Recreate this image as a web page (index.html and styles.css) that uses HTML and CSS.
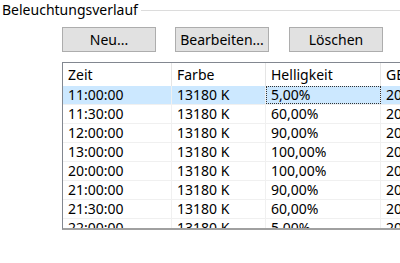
FILE: index.html
```html
<!DOCTYPE html>
<html lang="de">
<head>
    <meta charset="UTF-8">
    <title>Beleuchtungsverlauf</title>
    <link rel="stylesheet" href="styles.css">
</head>
<body>
    <div class="group">
        <div class="group-title">
            <span>Beleuchtungsverlauf</span>
            <div class="group-line"></div>
        </div>
        <div class="buttons">
            <button class="btn">Neu...</button>
            <button class="btn">Bearbeiten...</button>
            <button class="btn">Löschen</button>
        </div>
        <div class="list">
            <div class="row head">
                <div class="cell">Zeit</div>
                <div class="cell">Farbe</div>
                <div class="cell">Helligkeit</div>
                <div class="cell">GE</div>
            </div>
            <div class="row selected">
                <div class="cell">11:00:00</div>
                <div class="cell">13180 K</div>
                <div class="cell focus">5,00%</div>
                <div class="cell">20</div>
            </div>
            <div class="row">
                <div class="cell">11:30:00</div>
                <div class="cell">13180 K</div>
                <div class="cell">60,00%</div>
                <div class="cell">20</div>
            </div>
            <div class="row">
                <div class="cell">12:00:00</div>
                <div class="cell">13180 K</div>
                <div class="cell">90,00%</div>
                <div class="cell">20</div>
            </div>
            <div class="row">
                <div class="cell">13:00:00</div>
                <div class="cell">13180 K</div>
                <div class="cell">100,00%</div>
                <div class="cell">20</div>
            </div>
            <div class="row">
                <div class="cell">20:00:00</div>
                <div class="cell">13180 K</div>
                <div class="cell">100,00%</div>
                <div class="cell">20</div>
            </div>
            <div class="row">
                <div class="cell">21:00:00</div>
                <div class="cell">13180 K</div>
                <div class="cell">90,00%</div>
                <div class="cell">20</div>
            </div>
            <div class="row">
                <div class="cell">21:30:00</div>
                <div class="cell">13180 K</div>
                <div class="cell">60,00%</div>
                <div class="cell">20</div>
            </div>
            <div class="row">
                <div class="cell">22:00:00</div>
                <div class="cell">13180 K</div>
                <div class="cell">5,00%</div>
                <div class="cell">20</div>
            </div>
        </div>
    </div>
</body>
</html>
```

FILE: styles.css
```css
body {
    margin: 0;
    background: #ffffff;
    font-family: "Noto Sans", sans-serif;
    font-size: 14px;
    color: #000000;
    overflow: hidden;
    height: 263px;
}
.group-title {
    display: flex;
    align-items: center;
    height: 20px;
    padding-left: 2px;
}
.group-title span {
    line-height: 20px;
}
.group-line {
    flex: 1;
    height: 1px;
    background: #dcdcdc;
    margin-left: 3px;
}
.buttons {
    display: flex;
    gap: 19px;
    padding-left: 62px;
    margin-top: 7px;
}
.btn {
    width: 94px;
    height: 25px;
    background: #e1e1e1;
    border: 1px solid #adadad;
    font-family: inherit;
    font-size: 14px;
    padding: 0;
    color: #000000;
}
.buttons .btn:nth-child(3) {
    margin-left: 1px;
}
.list {
    margin-left: 62px;
    margin-top: 10px;
    height: 165px;
    border-top: 1px solid #828790;
    border-left: 1px solid #828790;
    border-bottom: 2px solid #a0a0a0;
    overflow: hidden;
}
.row {
    display: grid;
    grid-template-columns: 109px 94px 115px 100px;
    height: 19px;
    border-bottom: 1px solid #f0f0f0;
    box-sizing: border-box;
}
.row.head {
    height: 23px;
    border-bottom: none;
    align-items: center;
}
.cell {
    padding-left: 5px;
    line-height: 18px;
    border-right: 1px solid #f0f0f0;
    white-space: nowrap;
    overflow: hidden;
    box-sizing: border-box;
}
.head .cell {
    height: 23px;
    line-height: 23px;
    border-right: 1px solid #e5e5e5;
}
.selected {
    background: #cce8ff;
}
.focus {
    outline: 1px dotted #333333;
    outline-offset: -1px;
}
```
